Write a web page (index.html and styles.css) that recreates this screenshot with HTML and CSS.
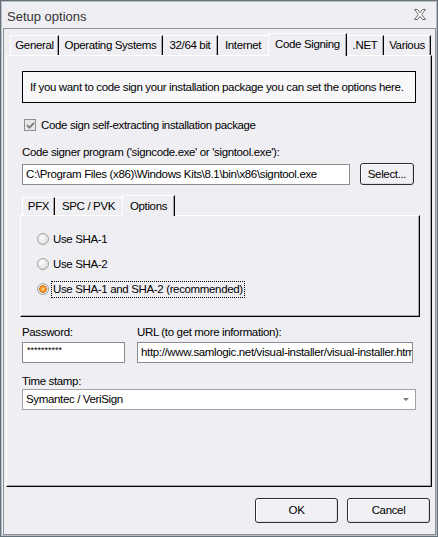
FILE: index.html
```html
<!DOCTYPE html>
<html lang="en">
<head>
  <meta charset="UTF-8" />
  <title>Setup options</title>
  <meta name="viewport" content="width=device-width, initial-scale=1.0" />
  <link rel="stylesheet" href="styles.css">
</head>
<body>

  <div class="window">
    <div class="titlebar">
      <span class="title">Setup options</span>
      <svg class="close" width="12" height="11" viewBox="0 0 12 11">
        <path d="M0.5 0.5H3.5L6 3.6L8.5 0.5H11.5L7.6 5.5L11.5 10.5H8.5L6 7.4L3.5 10.5H0.5L4.4 5.5Z" fill="#fbfbfd" stroke="#6a6a6a" stroke-width="1"/>
      </svg>
    </div>

    <div class="client">
      <div class="tabs">
        <div class="tab first w-general">General</div>
        <div class="tab w-os">Operating Systems</div>
        <div class="tab w-bits">32/64 bit</div>
        <div class="tab no-sep w-internet">Internet</div>
        <div class="tab selected w-signing">Code Signing</div>
        <div class="tab w-net">.NET</div>
        <div class="tab w-various">Various</div>
      </div>

      <div class="panel">
        <div class="info">If you want to code sign your installation package you can set the options here.</div>

        <div class="check-row">
          <span class="checkbox">
            <svg width="9" height="9" viewBox="0 0 9 9">
              <path d="M1 4.2L3.4 6.6L8 1.8" fill="none" stroke="#7b7b7b" stroke-width="1.8"/>
            </svg>
          </span>
          <span>Code sign self-extracting installation package</span>
        </div>

        <div class="label label-program">Code signer program ('signcode.exe' or 'signtool.exe'):</div>
        <div class="path-row">
          <div class="field field-path">C:\Program Files (x86)\Windows Kits\8.1\bin\x86\signtool.exe</div>
          <div class="button button-select">Select...</div>
        </div>

        <div class="subgroup">
          <div class="subtabs">
            <div class="tab first w-pfx">PFX</div>
            <div class="tab no-sep w-spc">SPC / PVK</div>
            <div class="tab selected w-options">Options</div>
          </div>
          <div class="subpanel">
            <div class="radio-row"><span class="radio"></span><span class="radio-label">Use SHA-1</span></div>
            <div class="radio-row"><span class="radio"></span><span class="radio-label">Use SHA-2</span></div>
            <div class="radio-row"><span class="radio checked"></span><span class="radio-label focused">Use SHA-1 and SHA-2 (recommended)</span></div>
          </div>
        </div>

        <div class="pair pair-labels">
          <div class="label col-password">Password:</div>
          <div class="label">URL (to get more information):</div>
        </div>
        <div class="pair">
          <div class="field field-password col-password">**********</div>
          <div class="field field-url">http://www.samlogic.net/visual-installer/visual-installer.htm</div>
        </div>

        <div class="label label-stamp">Time stamp:</div>
        <div class="field combo">
          <span>Symantec / VeriSign</span>
          <span class="arrow"></span>
        </div>
      </div>

      <div class="buttons">
        <div class="button button-dialog">OK</div>
        <div class="button button-dialog">Cancel</div>
      </div>
    </div>
  </div>

</body>
</html>
```

FILE: styles.css
```css
body {
  margin: 0;
  background: #efeef3;
  font-family: 'Liberation Sans', Arial, sans-serif;
  font-size: 11.5px;
  letter-spacing: -0.35px;
  color: #000;
}

.window {
  width: 438px;
  height: 537px;
  box-sizing: border-box;
  border: 1px solid #66707a;
  box-shadow: inset 0 0 0 1px #b9bec5;
  background: #efeef3;
  display: flex;
  flex-direction: column;
}

.titlebar {
  height: 27px;
  display: flex;
  align-items: center;
  justify-content: space-between;
  padding: 4px 11px 0 6px;
  box-sizing: border-box;
}

.title {
  font-size: 13px;
  letter-spacing: 0;
  color: #333;
}

.close {
  display: block;
  margin-top: -4px;
}

.client {
  flex: 1;
  margin: 0 1px 1px 2px;
  border: 1px solid #8c939b;
  padding: 4px 0 0 0;
  display: flex;
  flex-direction: column;
}

/* tab strips */

.tabs, .subtabs {
  display: flex;
  align-items: flex-end;
}

.tabs {
  height: 22px;
  padding-left: 6px;
}

.subtabs {
  height: 20px;
  padding-left: 2px;
}

.tab {
  box-sizing: border-box;
  height: 20px;
  border-top: 1px solid #fff;
  border-right: 1px solid #000;
  box-shadow: inset -1px 0 #a7a7ad;
  text-align: center;
  line-height: 19px;
  white-space: nowrap;
}

.subtabs .tab {
  height: 18px;
  line-height: 17px;
}

.tab.first {
  border-left: 1px solid #fff;
}

.tab.no-sep {
  border-right: none;
  box-shadow: none;
}

.tab.selected {
  height: 23px;
  margin-bottom: -1px;
  border-left: 1px solid #fff;
  position: relative;
  z-index: 1;
  background: #efeef3;
  line-height: 21px;
}

.subtabs .tab.selected {
  height: 21px;
  line-height: 20px;
}

.w-general { width: 49px; }
.w-os { width: 104px; }
.w-bits { width: 55px; }
.w-internet { width: 50px; }
.w-signing { width: 79px; }
.w-net { width: 37px; }
.w-various { width: 47px; }

.w-pfx { width: 33px; }
.w-spc { width: 67px; }
.w-options { width: 53px; }

/* panels */

.panel, .subpanel {
  box-sizing: border-box;
  border-top: 1px solid #fff;
  border-left: 1px solid #fff;
  border-right: 1px solid #000;
  border-bottom: 1px solid #000;
  box-shadow: inset -1px -1px #a7a7ad;
}

.panel {
  width: 426px;
  height: 432px;
  margin-left: 2px;
  padding: 15px 0 0 15px;
}

.info {
  box-sizing: border-box;
  width: 394px;
  height: 32px;
  border: 1px solid #000;
  background: #f8f8fb;
  padding-left: 7px;
  line-height: 30px;
  white-space: nowrap;
}

.check-row {
  display: flex;
  align-items: center;
  gap: 5px;
  height: 12px;
  margin-top: 16px;
  padding-left: 2px;
}

.checkbox {
  box-sizing: border-box;
  width: 12px;
  height: 12px;
  border: 1px solid #8e8f8f;
  background: #e6e6e6;
  display: flex;
  align-items: center;
  justify-content: center;
}

.checkbox svg {
  display: block;
}

.label {
  line-height: 15px;
  white-space: nowrap;
}

.label-program {
  margin-top: 14px;
}

.path-row {
  display: flex;
  align-items: flex-end;
  margin-top: 3px;
  height: 22px;
}

.field {
  box-sizing: border-box;
  height: 21px;
  border: 1px solid #8d8d8d;
  background: #fff;
  padding-left: 3px;
  line-height: 19px;
  white-space: nowrap;
  overflow: hidden;
}

.field-path {
  width: 328px;
}

.button {
  box-sizing: border-box;
  border: 1px solid #2e2e2e;
  border-radius: 3px;
  background: #f1f0f4;
  box-shadow: inset 1px 1px #fff, inset -1px -1px #dcdce2;
  text-align: center;
}

.button-select {
  width: 54px;
  height: 22px;
  line-height: 20px;
  margin-left: 10px;
}

/* inner tab group */

.subgroup {
  margin: 10px 0 0 -2px;
}

.subpanel {
  width: 400px;
  height: 102px;
  padding: 15px 0 0 16px;
  display: flex;
  flex-direction: column;
  gap: 9px;
}

.radio-row {
  display: flex;
  align-items: center;
  height: 16px;
}

.radio {
  box-sizing: border-box;
  width: 12px;
  height: 12px;
  border-radius: 50%;
  border: 1px solid #a3a3a3;
  background: radial-gradient(circle at 40% 35%, #fdfdfd 0%, #e4e4e4 60%, #cfcfcf 100%);
  margin-right: 3px;
  flex: none;
}

.radio.checked {
  background: radial-gradient(circle at 50% 50%, #ffd08a 0%, #f29a2e 35%, #d8700c 50%, #f3f3f3 58%, #d4d4d4 100%);
}

.radio-label {
  padding: 0 1px;
  line-height: 15px;
}

.radio-label.focused {
  outline: 1px dotted #000;
}

/* password / url / time stamp */

.pair {
  display: flex;
  gap: 12px;
}

.pair-labels {
  margin-top: 8px;
  margin-bottom: 2px;
}

.col-password {
  width: 103px;
}

.field-password {
  font-size: 9px;
  line-height: 15px;
  padding-left: 4px;
  letter-spacing: 0;
}

.field-url {
  width: 276px;
}

.label-stamp {
  margin-top: 11px;
}

.combo {
  width: 394px;
  display: flex;
  justify-content: space-between;
  align-items: center;
  border-color: #a2a2a2;
}

.arrow {
  width: 0;
  height: 0;
  border-left: 3px solid transparent;
  border-right: 3px solid transparent;
  border-top: 3px solid #777;
  margin-right: 6px;
}

/* dialog buttons */

.buttons {
  display: flex;
  justify-content: flex-end;
  gap: 9px;
  padding: 11px 5px 0 0;
}

.button-dialog {
  width: 83px;
  height: 25px;
  line-height: 23px;
}
```
